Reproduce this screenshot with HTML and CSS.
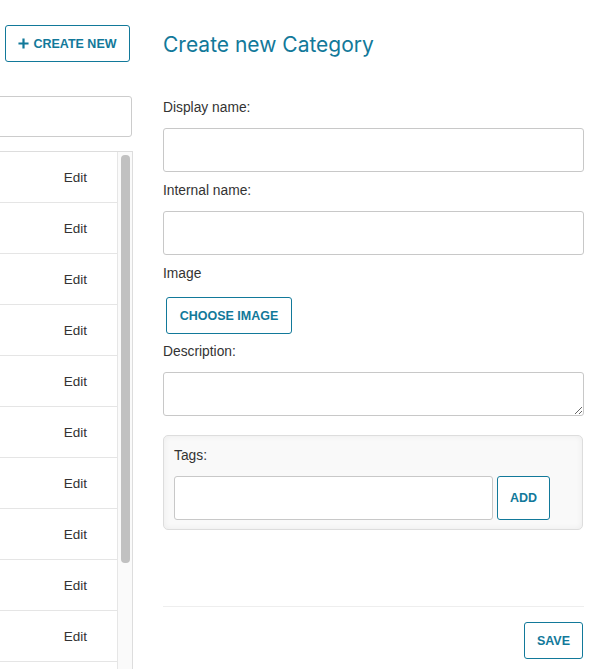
FILE: index.html
```html
<!DOCTYPE html>
<html lang="en">
<head>
<meta charset="utf-8">
<title>Create new Category</title>
<link rel="stylesheet" href="styles.css">
</head>
<body>
<div class="page">
  <aside class="sidebar">
    <div class="sidebar-top">
      <button class="btn btn-create" type="button">
        <svg class="plus" viewBox="0 0 12 12" width="11" height="11" aria-hidden="true"><path d="M6 0.5V11.5M0.5 6H11.5" stroke="currentColor" stroke-width="2.4"/></svg>
        CREATE NEW
      </button>
    </div>
    <input class="search" type="text">
    <div class="list">
      <ul class="rows">
        <li class="row"><span class="edit">Edit</span></li>
        <li class="row"><span class="edit">Edit</span></li>
        <li class="row"><span class="edit">Edit</span></li>
        <li class="row"><span class="edit">Edit</span></li>
        <li class="row"><span class="edit">Edit</span></li>
        <li class="row"><span class="edit">Edit</span></li>
        <li class="row"><span class="edit">Edit</span></li>
        <li class="row"><span class="edit">Edit</span></li>
        <li class="row"><span class="edit">Edit</span></li>
        <li class="row"><span class="edit">Edit</span></li>
      </ul>
      <div class="scrollbar"><div class="thumb"></div></div>
    </div>
  </aside>
  <main class="form">
    <h1 class="title">Create new Category</h1>
    <label class="label">Display name:</label>
    <input class="field" type="text">
    <label class="label">Internal name:</label>
    <input class="field" type="text">
    <label class="label">Image</label>
    <button class="btn btn-choose" type="button">CHOOSE IMAGE</button>
    <label class="label">Description:</label>
    <textarea class="field area"></textarea>
    <div class="tags">
      <label class="label tags-label">Tags:</label>
      <div class="tags-row">
        <input class="field tag-input" type="text">
        <button class="btn btn-add" type="button">ADD</button>
      </div>
    </div>
    <div class="footer">
      <button class="btn btn-save" type="button">SAVE</button>
    </div>
  </main>
</div>
</body>
</html>
```
FILE: styles.css
```css
html, body {
  margin: 0;
  padding: 0;
  height: 669px;
  overflow: hidden;
  background: #fff;
}
body {
  font-family: "Liberation Sans", Arial, sans-serif;
  color: #333;
  font-size: 13.8px;
}
.page {
  display: flex;
  margin-left: -167px;
}
.sidebar {
  width: 300px;
  display: flex;
  flex-direction: column;
}
.sidebar-top {
  display: flex;
  justify-content: flex-end;
  padding: 25px 3px 0 0;
}
.btn {
  font-family: "Liberation Sans", Arial, sans-serif;
  font-weight: bold;
  font-size: 12.5px;
  color: #12799a;
  background: #fff;
  border: 1px solid #12799a;
  border-radius: 3px;
  padding: 0;
  cursor: pointer;
}
.btn-create {
  width: 125px;
  height: 37px;
  display: flex;
  align-items: center;
  justify-content: center;
  gap: 4px;
}
.plus {
  display: block;
}
.search {
  box-sizing: border-box;
  margin: 34px 1px 0 0;
  height: 41px;
  border: 1px solid #ccc;
  border-radius: 3px;
  outline: none;
}
.list {
  margin-top: 14px;
  height: 517px;
  display: flex;
  border-top: 1px solid #ddd;
  border-right: 1px solid #ddd;
  overflow: hidden;
}
.rows {
  flex: 1;
  list-style: none;
  margin: 0;
  padding: 0;
}
.row {
  height: 50px;
  border-bottom: 1px solid #e5e5e5;
  display: flex;
  align-items: center;
  justify-content: flex-end;
  padding-right: 30px;
}
.edit {
  color: #333;
  font-size: 13.5px;
}
.scrollbar {
  box-sizing: border-box;
  width: 15px;
  flex: none;
  background: #fafafa;
  border-left: 1px solid #e6e6e6;
  padding: 3px 2px 0 3px;
}
.thumb {
  height: 408px;
  border-radius: 4px;
  background: #c1c1c1;
}
.form {
  width: 421px;
  margin-left: 30px;
  display: flex;
  flex-direction: column;
  align-items: flex-start;
}
.title {
  font-family: Inter, "Liberation Sans", sans-serif;
  font-weight: 400;
  font-size: 21px;
  line-height: 30px;
  color: #12799a;
  margin: 30px 0 38px;
}
.label {
  display: block;
  line-height: 20px;
  margin-bottom: 10px;
  color: #333;
}
.field {
  box-sizing: border-box;
  width: 421px;
  height: 44px;
  border: 1px solid #c8c8c8;
  border-radius: 3px;
  margin: 0 0 9px;
  outline: none;
  font-family: inherit;
  background: #fff;
}
.area {
  resize: vertical;
  display: block;
  margin-bottom: 19px;
}
.btn-choose {
  width: 126px;
  height: 37px;
  margin: 3px 0 8px 3px;
}
.tags {
  box-sizing: border-box;
  width: 420px;
  height: 95px;
  border: 1px solid #ddd;
  border-radius: 5px;
  background: #f9f9f9;
  box-shadow: inset 0 0 6px rgba(0, 0, 0, 0.06);
  padding: 10px 10px 0;
}
.tags-row {
  display: flex;
  gap: 4px;
}
.tag-input {
  width: 319px;
  height: 44px;
  margin: 0;
}
.btn-add {
  width: 53px;
  height: 44px;
}
.footer {
  width: 421px;
  margin-top: 76px;
  border-top: 1px solid #eee;
  padding-top: 15px;
  display: flex;
  justify-content: flex-end;
}
.btn-save {
  width: 59px;
  height: 37px;
  margin-right: 1px;
}
```
